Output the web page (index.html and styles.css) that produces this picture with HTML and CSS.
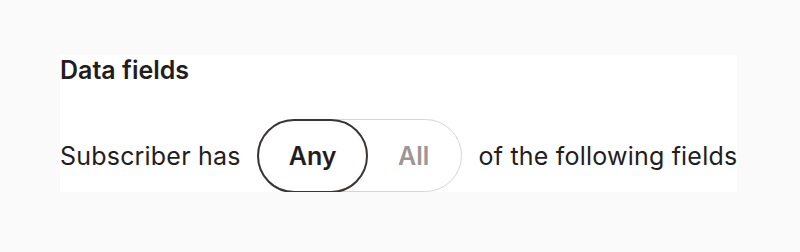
FILE: index.html
```html
<!DOCTYPE html>
<html lang="en">
<head>
  <meta charset="UTF-8" />
  <title>Data fields</title>
  <link rel="stylesheet" href="styles.css">
</head>
<body>
  <div class="campo">
    <h2 class="campo-titulo">Data fields</h2>
    <div class="campo-linha">
      <span>Subscriber has</span>
      <div class="seletor">
        <button class="opcao ativa">Any</button>
        <button class="opcao">All</button>
      </div>
      <span>of the following fields</span>
    </div>
  </div>
</body>
</html>
```
FILE: styles.css
```css
html, body {
  margin: 0; padding: 0;
  background: #fafafa;
  font-family: Inter, 'Liberation Sans', sans-serif;
  color: #231d1d;
}
.campo {
  display: inline-flex;
  flex-direction: column;
  gap: 34px;
  margin: 55px 0 0 60px;
  background: #fff;
}
.campo-titulo {
  margin: 0;
  font-size: 25px;
  font-weight: 600;
  line-height: 30px;
}
.campo-linha {
  display: flex;
  align-items: center;
  gap: 17px;
  font-size: 25px;
  letter-spacing: 0.2px;
}
.seletor {
  display: flex;
  width: 204px;
  height: 73px;
  box-sizing: border-box;
  border: 1.5px solid #d8d4d4;
  border-radius: 999px;
}
.opcao {
  flex: 1;
  margin: -1.5px;
  border: 2px solid transparent;
  border-radius: 999px;
  background: none;
  font-family: inherit;
  font-size: 25px;
  font-weight: 600;
  color: #9c9696;
}
.opcao.ativa {
  flex: 0 0 111px;
  border-color: #3b3434;
  color: #231d1d;
}
```
